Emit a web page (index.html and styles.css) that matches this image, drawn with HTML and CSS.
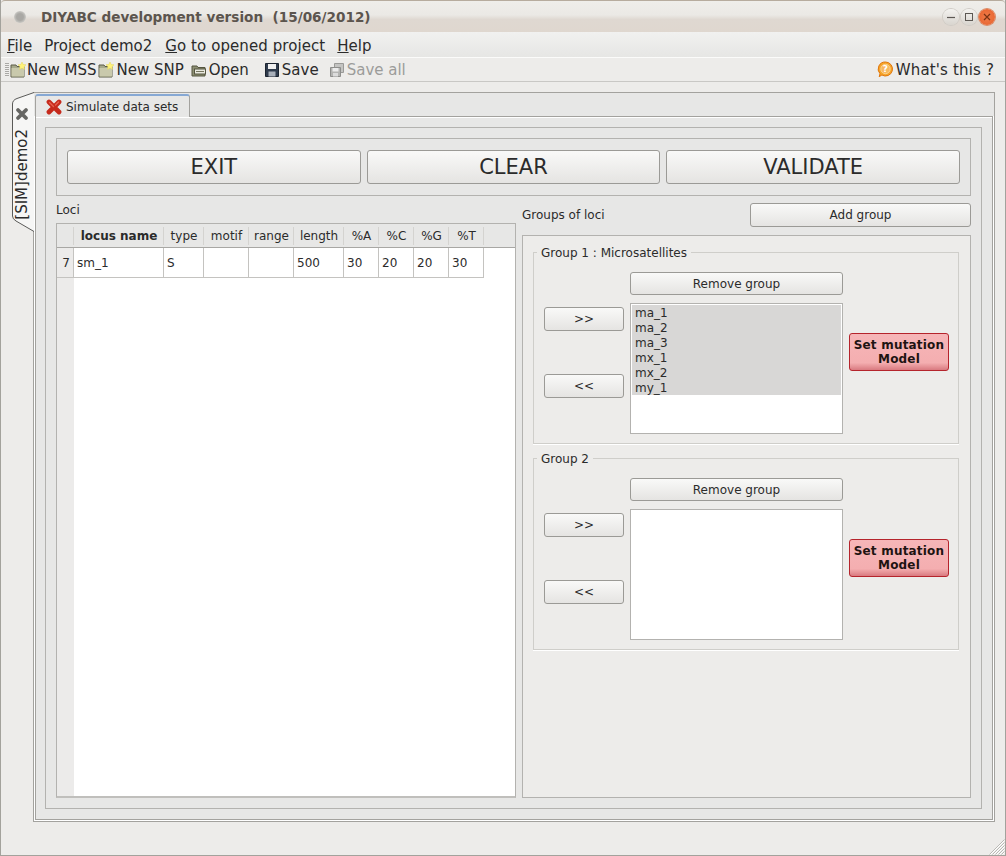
FILE: index.html
```html
<!DOCTYPE html>
<html lang="en">
<head>
<meta charset="utf-8">
<title>DIYABC development version</title>
<link rel="stylesheet" href="styles.css">
</head>
<body>
<div class="window">
  <header class="titlebar">
    <span class="title-dot"></span>
    <span class="title-text">DIYABC development version&nbsp; (15/06/2012)</span>
    <div class="controls">
      <span class="ctl"><svg width="12" height="12" viewBox="0 0 12 12"><path d="M2 6.500h8" stroke="#5c5853" stroke-width="1.200"/></svg></span>
      <span class="ctl"><svg width="12" height="12" viewBox="0 0 12 12"><rect x="2.500" y="2.500" width="7" height="7" fill="none" stroke="#5c5853"/></svg></span>
      <span class="ctl ctl-close"><svg width="12" height="12" viewBox="0 0 12 12"><path d="M3 3l6 6M9 3l-6 6" stroke="#7a3212" stroke-width="1.200"/></svg></span>
    </div>
  </header>
  <nav class="menubar">
    <span class="menu"><u>F</u>ile</span>
    <span class="menu">Project demo2</span>
    <span class="menu menu-go"><u>G</u>o to opened project</span>
    <span class="menu"><u>H</u>elp</span>
  </nav>
  <div class="toolbar">
    <span class="grip"></span>
    <span class="tool tool-mss"><svg class="ico" width="16" height="16" viewBox="0 0 16 16"><use href="#newfolder"/></svg>New MSS</span>
    <span class="tool tool-snp"><svg class="ico" width="16" height="16" viewBox="0 0 16 16"><use href="#newfolder"/></svg>New SNP</span>
    <span class="tool tool-open"><svg class="ico" width="16" height="16" viewBox="0 0 16 16"><path d="M1 4h5l1 1.500h7V14H1z" fill="#8d8f73" stroke="#55553f"/><rect x="3.500" y="7" width="11" height="5" fill="#e9e9df" stroke="#55553f"/><path d="M5 9.500h8" stroke="#77775f"/></svg>Open</span>
    <span class="tool tool-save"><svg class="ico" width="16" height="16" viewBox="0 0 16 16"><path d="M1.500 1.500h13v13h-13z" fill="#2f3b4c" stroke="#1c2430"/><rect x="4" y="2" width="8" height="5" fill="#f0f0f0"/><rect x="4.500" y="9.500" width="7" height="5" fill="#a9b0ba"/></svg>Save</span>
    <span class="tool tool-saveall is-disabled"><svg class="ico" width="16" height="16" viewBox="0 0 16 16"><path d="M5.500 1.500h9v9h-9z" fill="#c4c4c2" stroke="#9a9a98"/><path d="M1.500 5.500h10v9h-10z" fill="#b4b4b2" stroke="#8e8e8c"/><rect x="3.500" y="6" width="6" height="3.500" fill="#ececec"/><rect x="4" y="11" width="5" height="3.500" fill="#dcdcdc"/></svg>Save all</span>
    <span class="tool tool-help"><svg class="ico" width="17" height="17" viewBox="0 0 17 17"><path d="M8.500 1a7 7 0 1 1-3.600 13l-2.700 1.700.8-3A7 7 0 0 1 8.500 1z" fill="#f6a52a" stroke="#e0760c"/><circle cx="8.500" cy="8" r="4.700" fill="#f7b860" stroke="#fbd9a0" stroke-width=".8"/><text x="8.500" y="11.300" class="help-q">?</text></svg>What's this ?</span>
  </div>
  <main class="main">
    <div class="sidetab">
      <svg class="sidetab-shape" width="23" height="140" viewBox="0 0 23 140"><path d="M23 .5L6 6.500Q1.500 8 1.500 12V124Q1.500 127 5 129L23 139.500" fill="#f6f6f5" stroke="#5a5a58"/></svg>
      <svg class="sidetab-x" width="14" height="14" viewBox="0 0 14 14"><path d="M3 3l8 8M11 3l-8 8" stroke="#666663" stroke-width="3.800" stroke-linecap="round"/></svg>
      <span class="sidetab-label">[SIM]demo2</span>
    </div>
    <div class="outer-pane">
      <div class="tabrow">
        <div class="tab">
          <svg width="16" height="16" viewBox="0 0 16 16"><path d="M3 3l10 10M13 3L3 13" stroke="#c62a1c" stroke-width="4.800" stroke-linecap="round"/><path d="M3.500 3.500l4 4M12.500 3l-3 3" stroke="#e8604e" stroke-width="1.400" stroke-linecap="round"/></svg>
          <span>Simulate data sets</span>
        </div>
      </div>
      <div class="inner-pane">
        <div class="content">
          <div class="actions">
            <button class="btn btn-big">EXIT</button>
            <button class="btn btn-big">CLEAR</button>
            <button class="btn btn-big">VALIDATE</button>
          </div>
          <div class="columns">
            <section class="loci">
              <div class="caption loci-caption">Loci</div>
              <div class="tablebox">
                <div class="rowhead">
                  <div class="corner"></div>
                  <div class="rownum">7</div>
                </div>
                <div class="grid">
                  <div class="hrow">
                    <span class="h c1 bold">locus name</span><span class="h c2">type</span><span class="h c3">motif</span><span class="h c4">range</span><span class="h c5">length</span><span class="h c6">%A</span><span class="h c6">%C</span><span class="h c6">%G</span><span class="h c6">%T</span>
                  </div>
                  <div class="drow">
                    <span class="d c1">sm_1</span><span class="d c2">S</span><span class="d c3"></span><span class="d c4"></span><span class="d c5">500</span><span class="d c6">30</span><span class="d c6">20</span><span class="d c6">20</span><span class="d c6">30</span>
                  </div>
                </div>
              </div>
            </section>
            <section class="groups">
              <div class="groups-head">
                <span class="caption">Groups of loci</span>
                <button class="btn btn-add">Add group</button>
              </div>
              <div class="groups-panel">
                <div class="group">
                  <span class="legend">Group 1 : Microsatellites</span>
                  <div class="group-grid">
                    <div class="arrows">
                      <button class="btn btn-arrow">&gt;&gt;</button>
                      <button class="btn btn-arrow">&lt;&lt;</button>
                    </div>
                    <div class="mid">
                      <button class="btn btn-remove">Remove group</button>
                      <div class="list">
                        <div class="item">ma_1</div><div class="item">ma_2</div><div class="item">ma_3</div><div class="item">mx_1</div><div class="item">mx_2</div><div class="item">my_1</div>
                      </div>
                    </div>
                    <button class="btn-red">Set mutation<br>Model</button>
                  </div>
                </div>
                <div class="group">
                  <span class="legend">Group 2</span>
                  <div class="group-grid">
                    <div class="arrows">
                      <button class="btn btn-arrow">&gt;&gt;</button>
                      <button class="btn btn-arrow">&lt;&lt;</button>
                    </div>
                    <div class="mid">
                      <button class="btn btn-remove">Remove group</button>
                      <div class="list"></div>
                    </div>
                    <button class="btn-red">Set mutation<br>Model</button>
                  </div>
                </div>
              </div>
            </section>
          </div>
        </div>
      </div>
    </div>
  </main>
  <svg class="sizegrip" width="16" height="16" viewBox="0 0 16 16"><path d="M15.500 .5L.5 15.500M15.500 3.500L3.500 15.500M15.500 6.500L6.500 15.500M15.500 9.500L9.500 15.500M15.500 12.500L12.500 15.500" stroke="#b9b8b4" fill="none"/><path d="M15.500 1.500L1.500 15.500M15.500 4.500L4.500 15.500M15.500 7.500L7.500 15.500M15.500 10.500L10.500 15.500M15.500 13.500L13.500 15.500" stroke="#fff" fill="none"/></svg>
</div>
<svg class="defs" width="0" height="0"><defs><g id="newfolder"><path d="M1 3h5l1 1.500h7V15H1z" fill="#a7a98a" stroke="#5c5c48"/><path d="M1.500 6h12.500v8.500H1.500z" fill="#c9c9ac"/><path d="M12 0l1.200 2.500 2.800.3-2 1.900.5 2.800L12 6.100 9.500 7.500l.5-2.800-2-1.900 2.800-.3z" fill="#fff27a" stroke="#e3d45a" stroke-width=".5"/></g></defs></svg>
</body>
</html>
```
FILE: styles.css
```css
* { box-sizing: border-box; }
html, body { margin: 0; padding: 0; }
body { width: 1006px; height: 856px; overflow: hidden; font-family: "DejaVu Sans", sans-serif; color: #2b2b2b; background: #edecea; }
.defs { position: absolute; }
.window { position: relative; width: 1006px; height: 856px; display: flex; flex-direction: column; border: 1px solid #a3a29c; border-top: 0; background: #edecea; }

.titlebar { height: 32px; flex: none; display: flex; align-items: center; padding: 0 10px 0 13px; background: linear-gradient(#efeeea 0, #ebe9e5 45%, #dfd8d1 60%, #dfd7cf 100%); border-top: 1px solid #b7ac9e; border-radius: 4px 4px 0 0; }
.title-dot { width: 12px; height: 12px; border-radius: 50%; background: radial-gradient(#a9a8a4 40%, #c9c8c4 70%, #e4e3df); }
.title-text { margin-left: 15px; font-size: 13.600px; font-weight: bold; color: #5c554e; white-space: pre; }
.controls { margin-left: auto; display: flex; gap: 2px; }
.ctl { width: 16px; height: 16px; border-radius: 50%; display: flex; align-items: center; justify-content: center; background: linear-gradient(#f3f2ef, #d9d5cf); box-shadow: 0 0 0 1px #d0ccc6; }
.ctl-close { background: radial-gradient(#ee7c4a, #e8602a); box-shadow: 0 0 0 1px #d98a66; }

.menubar { height: 25px; flex: none; display: flex; align-items: center; padding: 3px 0 0 6px; gap: 12px; font-size: 15px; background: linear-gradient(#f1f1f0, #e6e6e4); }
.menu { white-space: pre; }
.menu-go { margin-left: 1px; letter-spacing: .08px; }

.toolbar { height: 25px; flex: none; display: flex; align-items: center; font-size: 15px; background: #edecea; border-top: 1px solid #fbfbfa; border-bottom: 1px solid #c9c8c5; }
.grip { width: 4px; height: 14px; margin-left: 4px; background: repeating-linear-gradient(#a9a8a5 0 1px, #efeeec 1px 2px); }
.tool { display: flex; align-items: center; gap: 2px; white-space: pre; }
.ico { flex: none; }
.tool-mss { margin-left: 1px; gap: 1px; }
.tool-snp { margin-left: 2px; }
.tool-open { margin-left: 7px; }
.tool-save { margin-left: 15px; }
.tool-saveall { margin-left: 10px; }
.tool-help { margin-left: auto; margin-right: 11px; gap: 2px; letter-spacing: .15px; }
.is-disabled { color: #9c9c9a; }
.help-q { font-size: 9px; font-weight: bold; fill: #fff; text-anchor: middle; font-family: "DejaVu Sans", sans-serif; }

.main { flex: 1; display: flex; padding: 10px 10px 33px 10px; min-height: 0; }
.sidetab { position: relative; z-index: 1; flex: none; width: 23px; height: 140px; margin-right: -1px; display: flex; flex-direction: column; align-items: center; padding: 15px 1px 0 0; }
.sidetab-shape { position: absolute; left: 0; top: 0; }
.sidetab-x { position: relative; flex: none; }
.sidetab-label { position: relative; writing-mode: vertical-rl; transform: rotate(180deg); font-size: 15px; margin-top: 8px; white-space: pre; }

.outer-pane { flex: 1; min-width: 0; display: flex; flex-direction: column; border: 1px solid #a3a29e; background: #fff; padding: 0 1px 1px 1px; }
.tabrow { height: 23px; flex: none; display: flex; align-items: flex-end; background: #e7e7e6; margin: 0 -1px; padding-left: 1px; }
.tab { position: relative; width: 155px; height: 23px; margin-bottom: -1px; display: flex; align-items: center; gap: 4px; padding-left: 10px; font-size: 12px; background: #e7e7e6; border: 1px solid #a3a29e; border-top: 2px solid #86a8d4; border-bottom: 0; border-radius: 3px 3px 0 0; }

.inner-pane { flex: 1; min-height: 0; padding: 10px 10px 10px 9px; background: #e7e7e6; border: 1px solid #a3a29e; box-shadow: inset 0 1px 0 #fff; }
.content { height: 100%; padding: 10px; border: 1px solid #b3b2af; display: flex; flex-direction: column; }
.actions { height: 58px; flex: none; display: flex; gap: 6px; padding: 11px 10px; border: 1px solid #b3b2af; }

.btn { font-family: inherit; color: #2b2b2b; background: linear-gradient(#f9f9f8, #e5e4e2); border: 1px solid #9b9a96; border-radius: 3px; padding: 0; cursor: default; }
.btn-big { flex: 1; font-size: 21px; height: 34px; }
.columns { flex: 1; min-height: 0; display: flex; gap: 6px; }

.caption { font-size: 12px; }
.loci { width: 460px; flex: none; display: flex; flex-direction: column; }
.loci-caption { height: 27px; flex: none; display: flex; align-items: center; padding-top: 1px; }
.tablebox { flex: 1; display: flex; background: #fff; border: 1px solid #b3b2af; border-bottom: 2px solid #c0bfbc; font-size: 12px; min-height: 0; }
.rowhead { width: 17px; flex: none; background: #ecebea; }
.corner { height: 24px; background: #e7e7e6; border-bottom: 1px solid #a8a7a4; }
.rownum { height: 30px; display: flex; align-items: center; justify-content: center; border-bottom: 1px solid #c4c3c0; padding-left: 1px; }
.grid { flex: 1; min-width: 0; margin-left: -1px; }
.hrow { height: 24px; display: flex; background: #e7e7e6; border-bottom: 1px solid #a8a7a4; }
.drow { height: 30px; display: flex; background: #fff; }
.h { display: flex; align-items: center; justify-content: center; padding-left: 1px; border-left: 1px solid #d4d3d0; margin: 3px 0; height: 18px; }
.h:last-child { width: 36px; border-right: 1px solid #d4d3d0; }
.d { display: flex; align-items: center; padding-left: 3px; border-left: 1px solid #c4c3c0; border-bottom: 1px solid #c4c3c0; }
.d:last-child { border-right: 1px solid #c4c3c0; width: 36px; }
.bold { font-weight: bold; }
.c1 { width: 90px; }
.c2 { width: 40px; }
.c3 { width: 45px; }
.c4 { width: 45px; }
.c5 { width: 50px; }
.c6 { width: 35px; }

.groups { width: 449px; flex: none; display: flex; flex-direction: column; }
.groups-head { height: 39px; flex: none; display: flex; align-items: flex-start; justify-content: space-between; padding-top: 7px; }
.groups-head .caption { line-height: 24px; }
.btn-add { width: 221px; height: 24px; font-size: 12px; }
.groups-panel { flex: 1; min-height: 0; padding: 16px 11px 0 10px; border: 1px solid #b3b2af; background: #edecea; display: flex; flex-direction: column; gap: 14px; }

.group { height: 192px; flex: none; border: 1px solid #cfceca; box-shadow: 0 1px 0 #fff; padding: 0 10px; }
.legend { display: table; margin: -7px 0 0 -7px; padding: 0 4px; height: 14px; line-height: 14px; font-size: 12px; background: #edecea; }
.group-grid { display: flex; gap: 6px; margin-top: 12px; }
.arrows { width: 80px; flex: none; display: flex; flex-direction: column; gap: 43px; padding-top: 35px; }
.btn-arrow { height: 24px; font-size: 12px; }
.mid { width: 213px; flex: none; display: flex; flex-direction: column; gap: 8px; }
.btn-remove { height: 23px; font-size: 12px; }
.list { height: 131px; background: #fff; border: 1px solid #b3b2af; padding: 1px; font-size: 12px; }
.item { height: 15px; line-height: 15px; padding: 1px 0 0 3px; background: #d8d7d6; }
.btn-red { width: 100px; height: 38px; flex: none; margin-top: 61px; font-family: inherit; font-size: 12px; font-weight: bold; letter-spacing: .2px; line-height: 14px; color: #1e1412; padding: 0; background: linear-gradient(#f6b6b8 0, #f4aeb0 80%, #d97a80 100%); border: 1px solid #b5242c; border-radius: 3px; }

.sizegrip { position: absolute; right: 0; bottom: 0; }
```
